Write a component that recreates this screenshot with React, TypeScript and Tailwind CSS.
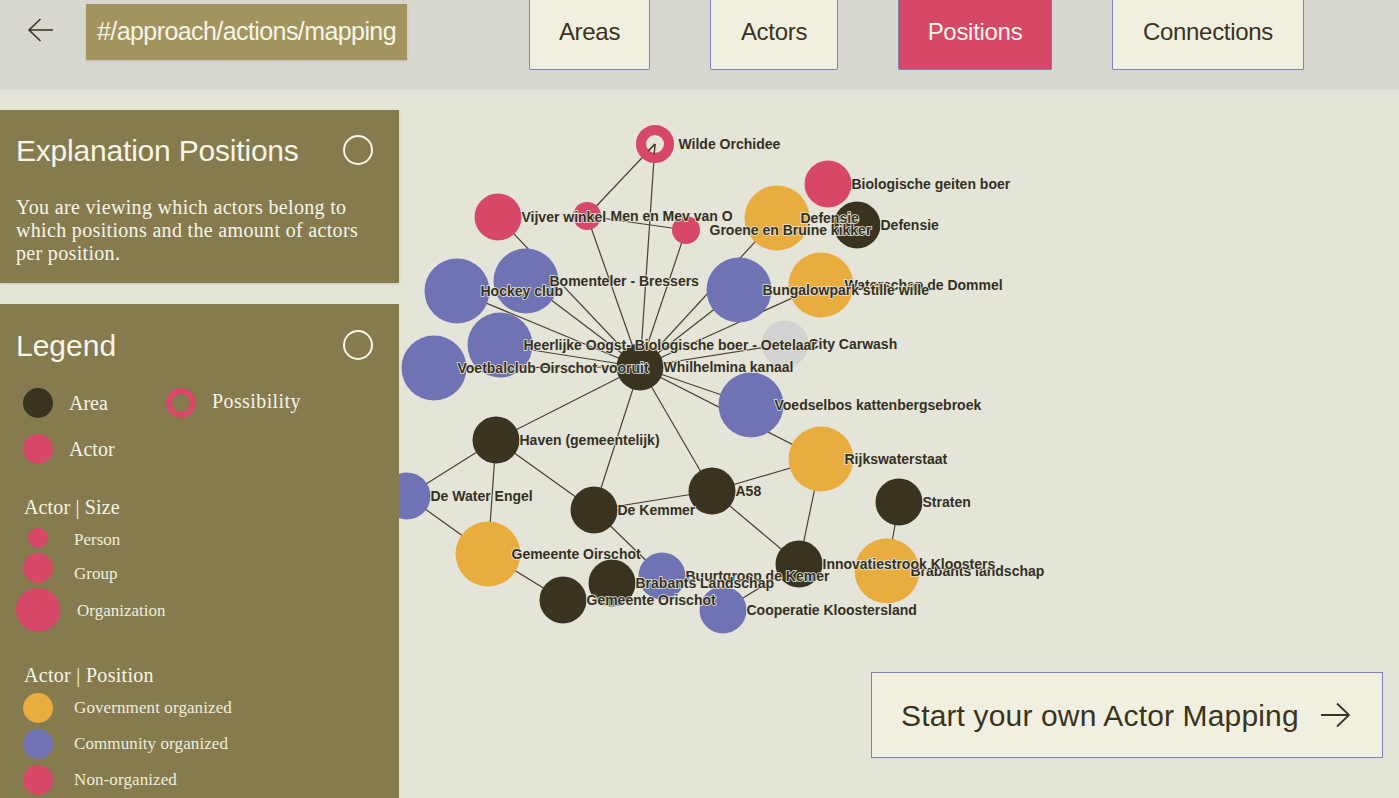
import React from "react";

const DARK = "#3a3320";
const PINK = "#d74868";
const YELLOW = "#e9ad3f";
const PURPLE = "#6f72b3";
const GREY = "#d2d2d0";

interface GraphNode {
  id: string;
  label: string;
  x: number;
  y: number;
  r: number;
  color: string;
  ring?: boolean;
}

const nodes: GraphNode[] = [
  { id: "wilde", label: "Wilde Orchidee", x: 655, y: 144, r: 19, color: PINK, ring: true },
  { id: "geiten", label: "Biologische geiten boer", x: 828, y: 184, r: 23.5, color: PINK },
  { id: "defYellow", label: "Defensie", x: 777, y: 218, r: 32.5, color: YELLOW },
  { id: "defDark", label: "Defensie", x: 857, y: 225, r: 23.5, color: DARK },
  { id: "vijver", label: "Vijver winkel", x: 498, y: 217, r: 23.5, color: PINK },
  { id: "mev", label: "Men en Mev van O", x: 587, y: 216, r: 14, color: PINK },
  { id: "groene", label: "Groene en Bruine kikker", x: 686, y: 230, r: 14, color: PINK },
  { id: "hockey", label: "Hockey club", x: 457, y: 291, r: 32.5, color: PURPLE },
  { id: "bomenteler", label: "Bomenteler - Bressers", x: 526, y: 281, r: 32.5, color: PURPLE },
  { id: "waterschap", label: "Waterschap de Dommel", x: 821, y: 285, r: 32.5, color: YELLOW },
  { id: "bungalow", label: "Bungalowpark stille wille", x: 739, y: 290, r: 32.5, color: PURPLE },
  { id: "carwash", label: "City Carwash", x: 785, y: 344, r: 23.5, color: GREY },
  { id: "heerlijke", label: "Heerlijke Oogst- Biologische boer - Oetelaar", x: 500, y: 345, r: 32.5, color: PURPLE },
  { id: "voetbal", label: "Voetbalclub Oirschot vooruit", x: 434, y: 368, r: 32.5, color: PURPLE },
  { id: "voedsel", label: "Voedselbos kattenbergsebroek", x: 751, y: 405, r: 32.5, color: PURPLE },
  { id: "rijks", label: "Rijkswaterstaat", x: 821, y: 459, r: 32.5, color: YELLOW },
  { id: "waterEngel", label: "De Water Engel", x: 407, y: 496, r: 23.5, color: PURPLE },
  { id: "gemeenteY", label: "Gemeente Oirschot", x: 488, y: 554, r: 32.5, color: YELLOW },
  { id: "haven", label: "Haven (gemeentelijk)", x: 496, y: 440, r: 23.5, color: DARK },
  { id: "kemmer", label: "De Kemmer", x: 594, y: 510, r: 23.5, color: DARK },
  { id: "a58", label: "A58", x: 712, y: 491, r: 23.5, color: DARK },
  { id: "straten", label: "Straten", x: 899, y: 502, r: 23.5, color: DARK },
  { id: "buurt", label: "Buurtgroep de Kemer", x: 662, y: 576, r: 23.5, color: PURPLE },
  { id: "brabantsL", label: "Brabants Landschap", x: 612, y: 583, r: 23.5, color: DARK },
  { id: "coop", label: "Cooperatie Kloostersland", x: 723, y: 610, r: 23.5, color: PURPLE },
  { id: "orischot", label: "Gemeente Orischot", x: 563, y: 600, r: 23.5, color: DARK },
  { id: "brabantsY", label: "Brabants landschap", x: 887, y: 571, r: 32.5, color: YELLOW },
  { id: "innovatie", label: "Innovatiestrook Kloosters", x: 799, y: 564, r: 23.5, color: DARK },
  { id: "hub", label: "Whilhelmina kanaal", x: 640, y: 367, r: 23.5, color: DARK },
];

const edges: [string, string][] = [
  ["hub", "wilde"],
  ["hub", "mev"],
  ["hub", "groene"],
  ["hub", "vijver"],
  ["hub", "hockey"],
  ["hub", "bomenteler"],
  ["hub", "heerlijke"],
  ["hub", "voetbal"],
  ["hub", "bungalow"],
  ["hub", "defYellow"],
  ["hub", "waterschap"],
  ["hub", "carwash"],
  ["hub", "voedsel"],
  ["hub", "rijks"],
  ["hub", "haven"],
  ["hub", "kemmer"],
  ["hub", "a58"],
  ["mev", "wilde"],
  ["mev", "groene"],
  ["haven", "waterEngel"],
  ["haven", "gemeenteY"],
  ["haven", "kemmer"],
  ["waterEngel", "gemeenteY"],
  ["gemeenteY", "orischot"],
  ["kemmer", "a58"],
  ["kemmer", "buurt"],
  ["a58", "rijks"],
  ["a58", "innovatie"],
  ["rijks", "innovatie"],
  ["straten", "brabantsY"],
  ["innovatie", "coop"],
];

const byId = (id: string) => nodes.find((n) => n.id === id)!;

const Graph: React.FC = () => (
  <svg width={1000} height={708} viewBox="399 90 1000 708" className="block">
    {edges.map(([a, b]) => (
      <line
        key={a + b}
        x1={byId(a).x}
        y1={byId(a).y}
        x2={byId(b).x}
        y2={byId(b).y}
        stroke="#47412e"
        strokeWidth={1.2}
      />
    ))}
    {nodes.map((n) =>
      n.ring ? (
        <circle key={n.id} cx={n.x} cy={n.y} r={14} fill="none" stroke={n.color} strokeWidth={10} />
      ) : (
        <circle key={n.id} cx={n.x} cy={n.y} r={n.r} fill={n.color} />
      ),
    )}
    {/* the edges show through the ring's hole */}
    <line x1={655} y1={144} x2={648} y2={151} stroke="#47412e" strokeWidth={1.2} />
    <line x1={655} y1={144} x2={654} y2={155} stroke="#47412e" strokeWidth={1.2} />
    {nodes.map((n) => (
      <text
        key={n.id}
        x={n.x + 23.5}
        y={n.y + 4.5}
        fontFamily="'Liberation Sans', Arial, sans-serif"
        fontWeight={700}
        fontSize={14}
        fill="#33301f"
        stroke="#e5e4d9"
        strokeWidth={1.6}
        paintOrder="stroke"
      >
        {n.label}
      </text>
    ))}
  </svg>
);

const Dot: React.FC<{ color: string; size: string }> = ({ color, size }) => (
  <div className="w-[44px] flex justify-center shrink-0">
    <div className={`rounded-full ${size}`} style={{ backgroundColor: color }} />
  </div>
);

const Toggle: React.FC = () => <div className="w-[30px] h-[30px] -mt-[2px] rounded-full border-2 border-[#f6f5e8]" />;

const tabs = [
  { name: "Areas", width: "w-[121px]" },
  { name: "Actors", width: "w-[128px]" },
  { name: "Positions", width: "w-[154px]", active: true },
  { name: "Connections", width: "w-[192px]" },
];

const App: React.FC = () => {
  return (
    <div className="w-[1399px] h-[798px] overflow-hidden bg-[#e5e4d9] font-['Liberation_Sans',Arial,sans-serif]">
      {/* top bar */}
      <header className="h-[90px] bg-[#d8d7d0] flex items-start">
        <div className="w-[86px] h-[60px] flex items-center justify-center shrink-0">
          <svg width="28" height="26" viewBox="0 0 28 26" fill="none" stroke="#3a3320" strokeWidth="1.6" className="-ml-[4px]">
            <path d="M26 13H2M13.5 2L2 13l11.5 11" />
          </svg>
        </div>
        <div className="mt-[4px] w-[321px] h-[56px] bg-[#a1945f] text-[#f6f5e8] text-[25px] tracking-[-0.58px] whitespace-nowrap flex items-center justify-center shadow-sm">
          #/approach/actions/mapping
        </div>
        <nav className="ml-[122px] flex gap-[60px]">
          {tabs.map((t) => (
            <div
              key={t.name}
              className={`${t.width} h-[70px] rounded-b-[2px] border border-t-0 border-[#7d7fb5] text-[24px] tracking-[-0.3px] flex items-center justify-center pb-[6px] ${
                t.active ? "bg-[#d74868] text-[#f6f5e8]" : "bg-[#f1f0e0] text-[#3a3320]"
              }`}
            >
              {t.name}
            </div>
          ))}
        </nav>
      </header>

      <div className="flex h-[708px]">
        {/* side panels */}
        <aside className="w-[399px] shrink-0 pt-[20px] flex flex-col gap-[21px] relative z-10">
          <section className="h-[173px] bg-[#857b4f] shadow-sm px-[16px] pt-[20px] text-[#f6f5e8]">
            <div className="flex items-center justify-between pr-[10px]">
              <h2 className="text-[30px] leading-[42px] tracking-[-0.2px]">Explanation Positions</h2>
              <Toggle />
            </div>
            <p className="mt-[24px] font-['Liberation_Serif',serif] text-[20px] leading-[23px] tracking-[0.33px]">
              You are viewing which actors belong to which positions and the amount of actors per position.
            </p>
          </section>

          <section className="flex-1 bg-[#857b4f] text-[#f6f5e8] font-['Liberation_Serif',serif]">
            <div className="flex items-center justify-between pl-[16px] pr-[26px] pt-[21px]">
              <h2 className="font-['Liberation_Sans',sans-serif] text-[30px] leading-[42px]">Legend</h2>
              <Toggle />
            </div>

            <div className="mt-[21px] pl-[16px] flex flex-col gap-[16px]">
              <div className="flex items-center h-[30px]">
                <Dot color={DARK} size="w-[30px] h-[30px]" />
                <span className="ml-[9px] w-[97px] text-[20px]">Area</span>
                <div className="w-[30px] h-[30px] rounded-full border-[6px] border-[#d74868]" />
                <span className="ml-[16px] -mt-[4px] text-[20px] tracking-[0.4px]">Possibility</span>
              </div>
              <div className="flex items-center h-[30px]">
                <Dot color={PINK} size="w-[30px] h-[30px]" />
                <span className="ml-[9px] text-[20px]">Actor</span>
              </div>
            </div>

            <h3 className="mt-[31px] ml-[24px] text-[20px] leading-[24px] tracking-[0.15px]">Actor | Size</h3>
            <div className="mt-[9px] pl-[16px] text-[17px] text-[#efeedd]">
              <div className="flex items-center h-[20px]">
                <Dot color={PINK} size="w-[20px] h-[20px]" />
                <span className="ml-[14px] mt-[3px]">Person</span>
              </div>
              <div className="flex items-center h-[30px] mt-[5px]">
                <Dot color={PINK} size="w-[30px] h-[30px]" />
                <span className="ml-[14px] mt-[12px]">Group</span>
              </div>
              <div className="flex items-center h-[44px] mt-[5px]">
                <Dot color={PINK} size="w-[44px] h-[44px]" />
                <span className="ml-[17px] mt-[2px]">Organization</span>
              </div>
            </div>

            <h3 className="mt-[31px] ml-[24px] text-[20px] leading-[24px] tracking-[0.3px]">Actor | Position</h3>
            <div className="mt-[6px] pl-[16px] flex flex-col gap-[6px] text-[17px] text-[#efeedd] tracking-[0.1px]">
              {[
                { label: "Government organized", color: YELLOW },
                { label: "Community organized", color: PURPLE },
                { label: "Non-organized", color: PINK },
              ].map((row) => (
                <div key={row.label} className="flex items-center h-[30px]">
                  <Dot color={row.color} size="w-[30px] h-[30px]" />
                  <span className="ml-[14px]">{row.label}</span>
                </div>
              ))}
            </div>
          </section>
        </aside>

        {/* canvas */}
        <main className="flex-1 relative overflow-hidden">
          <Graph />
          <button className="absolute right-[16px] bottom-[40px] w-[512px] h-[86px] bg-[#f1f0e0] border border-[#7d7fb5] text-[#3a3320] text-[30px] tracking-[0.15px] whitespace-nowrap flex items-center justify-between pl-[29px] pr-[31px]">
            <span>Start your own Actor Mapping</span>
            <svg width="32" height="30" viewBox="0 0 32 30" fill="none" stroke="#3a3320" strokeWidth="1.8">
              <path d="M2 15h28M18 3.5 30 15 18 26.5" />
            </svg>
          </button>
        </main>
      </div>
    </div>
  );
};

export default App;
